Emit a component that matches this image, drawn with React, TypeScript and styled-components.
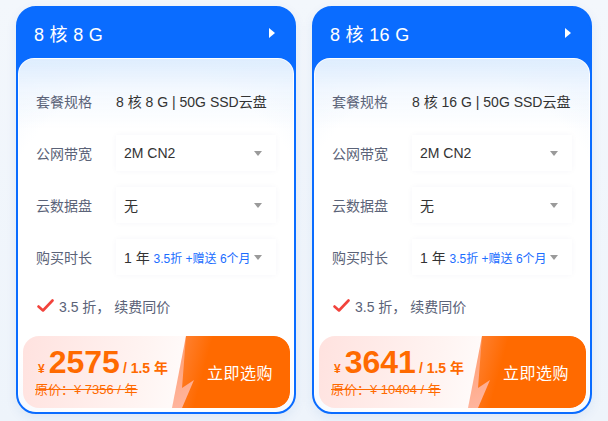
import React from 'react'
import styled, { createGlobalStyle } from 'styled-components'

const GlobalStyle = createGlobalStyle`
    body {
        margin: 0;
        background: #f1f6fc;
        font-family: "Liberation Sans", "Noto Sans CJK SC", sans-serif;
    }
`

const Page = styled.div`
    display: flex;
    gap: 16px;
    padding: 6px 16px 0 16px;
    height: 421px;
    box-sizing: border-box;
    background: linear-gradient(180deg, #f3f7fc 0%, #eef4fb 100%);
`

const Card = styled.div`
    width: 280px;
    height: 408px;
    box-sizing: border-box;
    border: 2px solid #0a6cff;
    border-radius: 20px;
    background: #0a6cff;
    display: flex;
    flex-direction: column;
    overflow: hidden;
    box-shadow: 0 4px 12px rgba(30, 90, 180, 0.08);
`

const Header = styled.div`
    height: 50px;
    flex-shrink: 0;
    display: flex;
    align-items: center;
    justify-content: space-between;
    padding: 0 19px 0 16px;
`

const Title = styled.div`
    color: #fff;
    font-size: 18px;
    letter-spacing: 0.3px;
`

const Arrow = styled.div`
    width: 0;
    height: 0;
    border-top: 5px solid transparent;
    border-bottom: 5px solid transparent;
    border-left: 6px solid #fff;
`

const Panel = styled.div`
    flex: 1;
    display: flex;
    flex-direction: column;
    border: 1px solid rgba(255, 255, 255, 0.85);
    border-radius: 16px;
    padding: 24px 16px 3px 17px;
    background:
        linear-gradient(180deg, #deedfe 0%, rgba(236, 244, 254, 0.6) 30px, rgba(255, 255, 255, 0) 70px),
        radial-gradient(ellipse 95% 80% at 50% 55%, #ffffff 62%, #eaf3fd 100%);
`

const Rows = styled.div`
    display: flex;
    flex-direction: column;
    gap: 16px;
`

const Row = styled.div`
    display: flex;
    align-items: center;
    height: 36px;
`

const Label = styled.div`
    width: 80px;
    flex-shrink: 0;
    font-size: 14px;
    color: #5b6378;
`

const Value = styled.div`
    font-size: 14px;
    color: #333;
    white-space: nowrap;
`

const Select = styled.div`
    width: 160px;
    height: 36px;
    box-sizing: border-box;
    background: #fff;
    box-shadow: 0 0 6px rgba(20, 60, 120, 0.04);
    display: flex;
    align-items: center;
    justify-content: space-between;
    padding: 0 14px 0 8px;
    font-size: 14px;
    color: #333;
    white-space: nowrap;
`

const Highlight = styled.span`
    color: #1a6dff;
    font-size: 12px;
`

const Caret = styled.span`
    width: 0;
    height: 0;
    border-left: 4px solid transparent;
    border-right: 4px solid transparent;
    border-top: 5px solid #9a9a9a;
    flex-shrink: 0;
`

const Promo = styled.div`
    display: flex;
    align-items: center;
    gap: 5px;
    margin-top: 21px;
    height: 20px;
    padding-left: 1px;
    font-size: 14px;
    color: #5b6378;
`

const PriceBox = styled.div`
    margin-top: auto;
    height: 72px;
    display: flex;
    border-radius: 16px;
    overflow: hidden;
    background: linear-gradient(100deg, #ffe2df 0%, #fff4f2 45%, #fff 70%);
    margin-left: -13px;
    margin-right: -13px;
`

const PriceInfo = styled.div`
    flex: 1;
    display: flex;
    flex-direction: column;
    justify-content: center;
    padding-left: 12px;
    color: #ff6a00;
    gap: 1px;
`

const PriceLine = styled.div`
    display: flex;
    align-items: baseline;
    font-weight: bold;
    white-space: nowrap;
`

const Yen = styled.span`
    font-size: 12px;
    margin: 0 4px 0 3px;
`

const Amount = styled.span`
    font-size: 32px;
    line-height: 32px;
`

const Unit = styled.span`
    font-size: 14px;
    margin-left: 3px;
`

const Original = styled.div`
    font-size: 13px;
    text-decoration: line-through;
    white-space: nowrap;
`

const BuyButton = styled.div`
    position: relative;
    width: 118px;
    flex-shrink: 0;
    border-radius: 0 16px 16px 0;
    overflow: hidden;
`

const Stripe = styled.div`
    position: absolute;
    inset: 0;
    clip-path: polygon(14px 0, 100% 0, 100% 100%, 0 100%);
    background: linear-gradient(160deg, #ff9a6a 0%, #ffb39a 60%, #ffc6bb 100%);
`

const Bolt = styled.div`
    position: absolute;
    inset: 0;
    clip-path: polygon(14px 0, 100% 0, 100% 100%, 10px 100%, 22px 44px, 10px 52px);
    background: linear-gradient(105deg, #ff8a45 0%, #ff6a00 30%, #ff6a00 100%);
    display: flex;
    align-items: center;
    justify-content: center;
    padding-left: 18px;
    color: #fff;
    font-size: 16px;
    letter-spacing: 0.5px;
`

const Check = () => (
    <svg width='17' height='14' viewBox='0 0 17 14'>
        <path d='M1.5 7.5 L6 11.5 L15.5 1.5' fill='none' stroke='#f2433c' strokeWidth='2.6' strokeLinecap='round' strokeLinejoin='round' />
    </svg>
)

type Plan = {
    title: string
    spec: string
    price: string
    original: string
}

const plans: Plan[] = [
    { title: '8 核 8 G', spec: '8 核 8 G | 50G SSD云盘', price: '2575', original: '原价：¥ 7356 / 年' },
    { title: '8 核 16 G', spec: '8 核 16 G | 50G SSD云盘', price: '3641', original: '原价：¥ 10404 / 年' },
]

const PlanCard = ({ plan }: { plan: Plan }) => (
    <Card>
        <Header>
            <Title>{plan.title}</Title>
            <Arrow />
        </Header>
        <Panel>
            <Rows>
                <Row>
                    <Label>套餐规格</Label>
                    <Value>{plan.spec}</Value>
                </Row>
                <Row>
                    <Label>公网带宽</Label>
                    <Select>2M CN2<Caret /></Select>
                </Row>
                <Row>
                    <Label>云数据盘</Label>
                    <Select>无<Caret /></Select>
                </Row>
                <Row>
                    <Label>购买时长</Label>
                    <Select>
                        <span>1 年 <Highlight>3.5折 +赠送 6个月</Highlight></span>
                        <Caret />
                    </Select>
                </Row>
            </Rows>
            <Promo>
                <Check />
                <span>3.5 折， 续费同价</span>
            </Promo>
            <PriceBox>
                <PriceInfo>
                    <PriceLine>
                        <Yen>¥</Yen>
                        <Amount>{plan.price}</Amount>
                        <Unit>/ 1.5 年</Unit>
                    </PriceLine>
                    <Original>{plan.original}</Original>
                </PriceInfo>
                <BuyButton>
                    <Stripe />
                    <Bolt>立即选购</Bolt>
                </BuyButton>
            </PriceBox>
        </Panel>
    </Card>
)

const App = () => {
    return (
        <>
            <GlobalStyle />
            <Page>
                {plans.map(p => <PlanCard key={p.title} plan={p} />)}
            </Page>
        </>
    )
}

export default App
